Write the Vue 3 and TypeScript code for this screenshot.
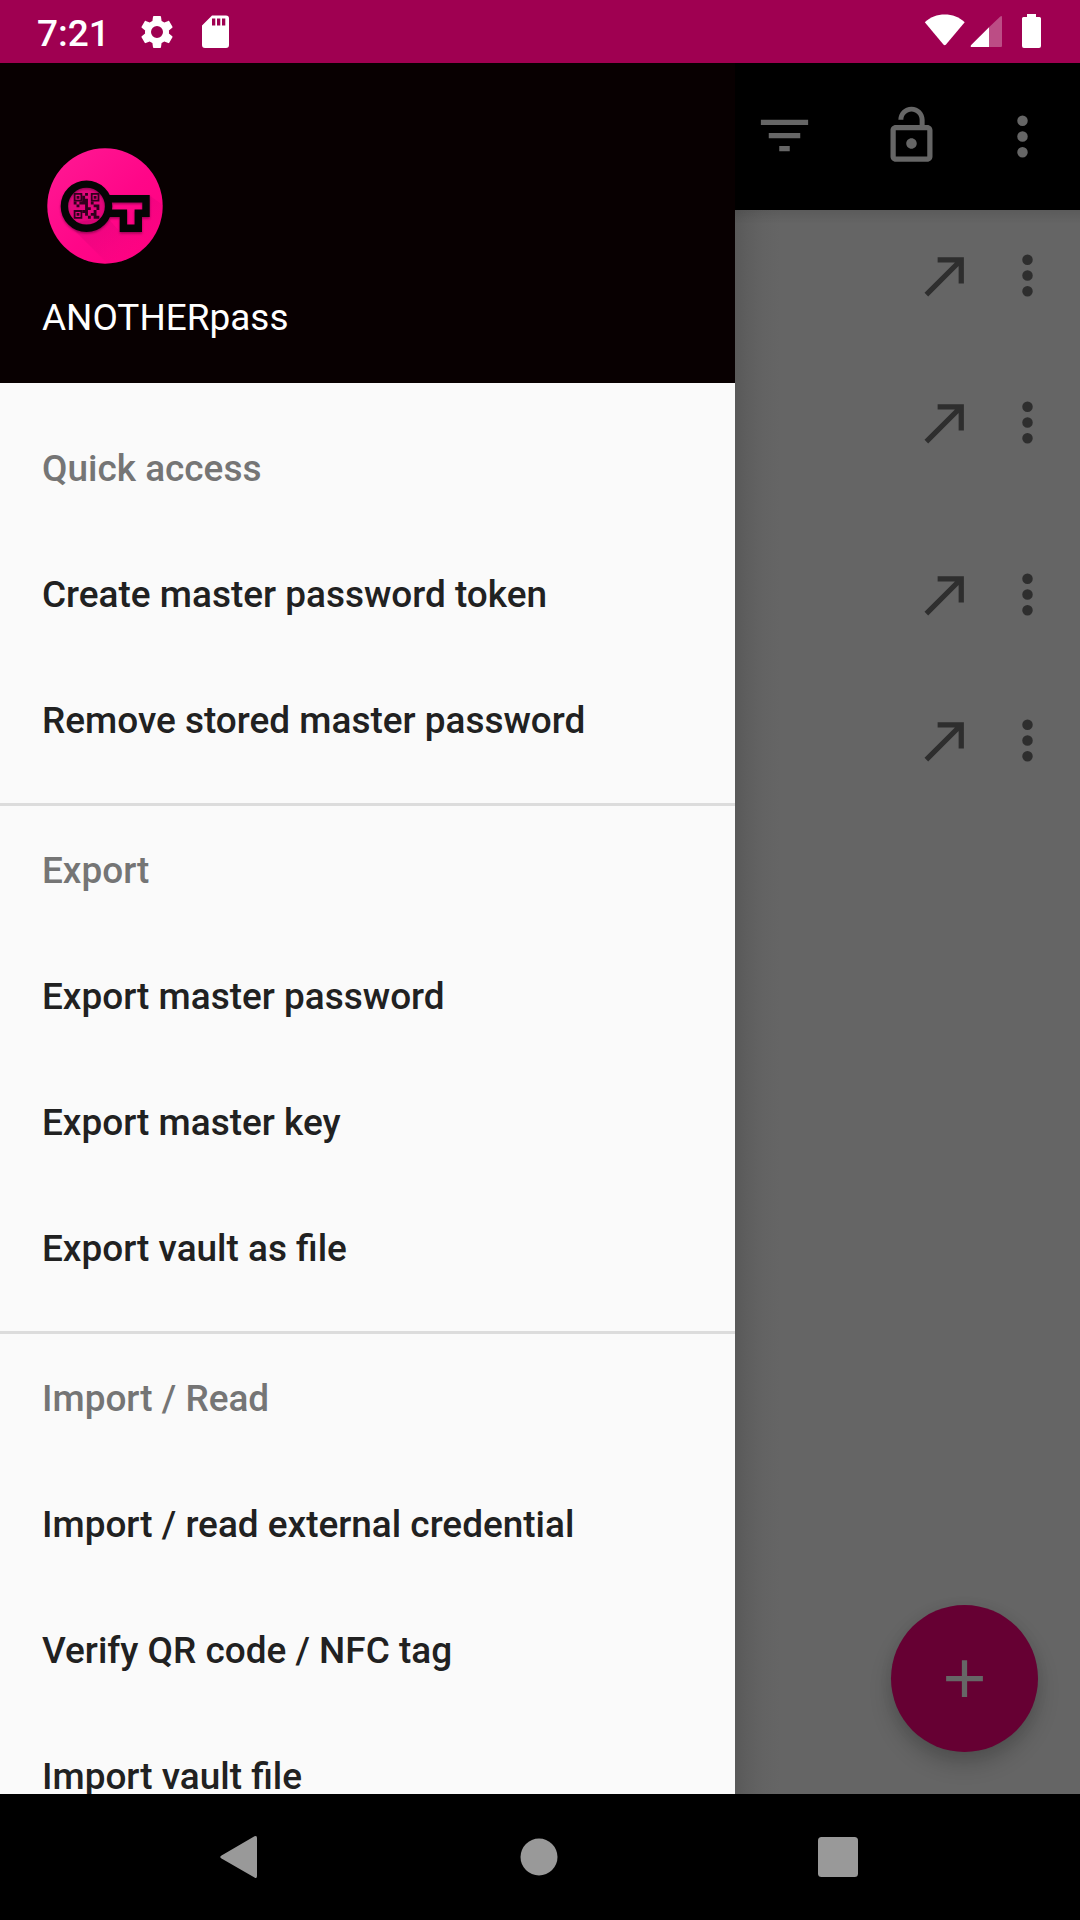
<script setup lang="ts">
interface Section {
  title: string
  items: string[]
}

const sections: Section[] = [
  { title: 'Quick access', items: ['Create master password token', 'Remove stored master password'] },
  { title: 'Export', items: ['Export master password', 'Export master key', 'Export vault as file'] },
  { title: 'Import / Read', items: ['Import / read external credential', 'Verify QR code / NFC tag', 'Import vault file'] },
]

// Heights of the credential rows; the third starts after a wider gap
const credentialRows: number[] = [147, 172, 146, 147]

// Modules of the small code inside the key's bow, without the three finders
const code: string[] = [
  '....#....',
  '...#.....',
  '...##....',
  '#.###.#..',
  '.#..#..##',
  '....##..#',
  '...##..#.',
  '....#.##.',
  '.....#.##',
]
const unit = 2.85
const modulePath: string = code
  .flatMap((line, r) =>
    [...line].map((c, i) => (c === '#' ? `M${31.7 + i * unit} ${50 + r * unit}h${unit}v${unit}h-${unit}z` : '')),
  )
  .join('')
</script>

<template>
  <div class="screen">
    <header class="status">
      <span class="clock">7:21</span>
      <svg class="gear" width="40" height="40" viewBox="0 0 24 24"><path fill="#fff" d="M19.14 12.94c.04-.3.06-.61.06-.94 0-.32-.02-.64-.07-.94l2.03-1.58c.18-.14.23-.41.12-.61l-1.92-3.32c-.12-.22-.37-.29-.59-.22l-2.39.96c-.5-.38-1.03-.7-1.62-.94L14.4 2.810c-.04-.24-.24-.41-.48-.41h-3.84c-.24 0-.43.17-.47.41l-.36 2.54c-.59.24-1.13.57-1.62.94l-2.39-.96c-.22-.08-.47 0-.59.22L2.740 8.870c-.12.21-.08.47.12.61l2.030 1.580c-.05.3-.09.63-.09.94s.02.64.07.94l-2.03 1.58c-.18.14-.23.41-.12.61l1.920 3.320c.12.22.37.29.59.22l2.390-.96c.5.38 1.030.7 1.620.94l.36 2.540c.05.24.24.41.48.41h3.840c.24 0 .44-.17.47-.41l.36-2.540c.59-.24 1.130-.56 1.620-.94l2.390.96c.22.08.47 0 .59-.22l1.920-3.320c.12-.22.07-.47-.12-.61l-2.010-1.580zM12 15.600A3.600 3.600 0 1 1 12 8.400a3.600 3.600 0 0 1 0 7.200z" /></svg>
      <svg class="card" width="27" height="34" viewBox="0 0 27 34"><path fill="#fff" fill-rule="evenodd" d="M10 0.500h14a3 3 0 0 1 3 3V30a3 3 0 0 1-3 3H3a3 3 0 0 1-3-3V10.500zM10 3.500v7h3.300v-7zM15 3.500v7h3.300v-7zM20 3.500v7h3.300v-7z" /></svg>
      <span class="fill" />
      <svg class="signals" width="120" height="36" viewBox="0 0 120 36">
        <path fill="#fff" d="M.8 8.200C11-2.200 30.500-2.200 40.700 8.200L22 30.600q-1.300 1.500-2.600 0z" />
        <path fill="#fff" opacity=".3" d="M78 32V3.200Q78 1 76.300 2.500L65 13.300V33h12q1 0 1-1z" />
        <path fill="#fff" d="M65 13.300V33H48.200q-2.600 0-1-2z" />
        <path fill="#fff" d="M103 0h9v3h3.500q1.500 0 1.500 1.500V32q0 2-2 2H100q-2 0-2-2V4.500Q98 3 99.500 3h3.500z" />
      </svg>
    </header>

    <main class="body">
      <aside class="drawer">
        <div class="head">
          <svg class="logo" width="126" height="126" viewBox="0 0 126 126">
            <defs>
              <linearGradient id="disc" x1="0" y1="0" x2="1" y2="1">
                <stop offset="0" stop-color="#ff1a94" /><stop offset=".55" stop-color="#ff0688" /><stop offset="1" stop-color="#ff0080" />
              </linearGradient>
              <clipPath id="round"><circle cx="63" cy="63" r="57.700" /></clipPath>
              <linearGradient id="cast" x1="0" y1="0" x2="1" y2="1">
                <stop offset=".1" stop-color="#b00068" stop-opacity=".4" /><stop offset=".7" stop-color="#d00070" stop-opacity=".04" />
              </linearGradient>
              <filter id="soft" x="-20%" y="-20%" width="140%" height="150%"><feGaussianBlur stdDeviation="1.300" /></filter>
            </defs>
            <circle cx="63" cy="63" r="57.700" fill="url(#disc)" />
            <g clip-path="url(#round)">
              <path d="M26 81 70 125 126 126V66L107 52v22H100v15H78L65 74z" fill="url(#cast)" />
            </g>
            <circle cx="44.500" cy="63.200" r="20" fill="#a00058" opacity=".3" />
            <g fill="none" stroke-width="7.400">
              <g stroke="#600038" opacity=".6" filter="url(#soft)" transform="translate(0 1.500)">
                <circle cx="44.500" cy="63.200" r="22.100" />
                <path d="M66 55.700h38v14.600h-7.700v15H81.400v-15H66" />
              </g>
              <circle cx="44.500" cy="63.200" r="22.100" stroke="#050505" />
              <path d="M66 55.700h38v14.600h-7.700v15H81.400v-15H66" stroke="#050505" />
            </g>
            <path stroke="#30001d" stroke-width="1.800" fill="none" d="M32.600 50.900h6.800v6.800h-6.800zM49.700 50.900h6.800v6.800h-6.800zM32.600 68h6.800v6.800h-6.800z" />
            <path fill="#30001d" d="M34.600 52.900h2.800v2.800h-2.800zM51.700 52.900h2.800v2.800h-2.800zM34.600 70h2.800v2.800h-2.800z" />
            <path fill="#30001d" :d="modulePath" />
          </svg>
          <h1>ANOTHERpass</h1>
        </div>
        <nav class="menu">
          <section v-for="s in sections" :key="s.title">
            <h2>{{ s.title }}</h2>
            <a v-for="item in s.items" :key="item">{{ item }}</a>
          </section>
        </nav>
      </aside>

      <div class="content">
        <div class="toolbar">
          <svg class="filter" width="63" height="63" viewBox="0 0 24 24"><path fill="#666" d="M10 18h4v-2h-4v2zM3 6v2h18V6H3zm3 7h12v-2H6v2z" /></svg>
          <svg class="lock" width="63" height="63" viewBox="0 0 24 24"><path fill="#666" d="M18 8h-1V6c0-2.760-2.240-5-5-5S7 3.240 7 6h1.900c0-1.710 1.390-3.100 3.100-3.100 1.710 0 3.100 1.390 3.100 3.100v2H6c-1.100 0-2 .9-2 2v10c0 1.100.9 2 2 2h12c1.100 0 2-.9 2-2V10c0-1.100-.9-2-2-2zm0 12H6V10h12v10zm-6-3c1.100 0 2-.9 2-2s-.9-2-2-2-2 .9-2 2 .9 2 2 2z" /></svg>
          <svg class="more" width="63" height="63" viewBox="0 0 24 24"><path fill="#666" d="M12 8a2 2 0 1 0 0-4 2 2 0 0 0 0 4zm0 2a2 2 0 1 0 0 4 2 2 0 0 0 0-4zm0 6a2 2 0 1 0 0 4 2 2 0 0 0 0-4z" /></svg>
        </div>
        <div class="list">
          <div v-for="(h, i) in credentialRows" :key="i" class="row" :style="{ height: h + 'px' }">
            <svg width="63" height="63" viewBox="0 0 24 24"><path fill="#2e2e2e" d="M9 5v2h6.590L4 18.590 5.410 20 17 8.410V15h2V5z" /></svg>
            <svg class="rowmore" width="63" height="63" viewBox="0 0 24 24"><path fill="#2e2e2e" d="M12 8a2 2 0 1 0 0-4 2 2 0 0 0 0 4zm0 2a2 2 0 1 0 0 4 2 2 0 0 0 0-4zm0 6a2 2 0 1 0 0 4 2 2 0 0 0 0-4z" /></svg>
          </div>
        </div>
        <button class="fab" aria-label="Add">
          <svg width="63" height="63" viewBox="0 0 24 24"><path fill="#666" d="M19 13h-6v6h-2v-6H5v-2h6V5h2v6h6v2z" /></svg>
        </button>
      </div>
    </main>

    <footer class="navbar">
      <svg width="38" height="44" viewBox="0 0 38 44"><path fill="#999" d="M34.500 1.300Q37 0 37 3v38q0 3-2.500 1.500L1.500 23.600q-2.500-1.600 0-3.200z" /></svg>
      <svg class="home" width="38" height="38" viewBox="0 0 38 38"><circle cx="19" cy="19" r="18.500" fill="#999" /></svg>
      <svg class="recent" width="40" height="40" viewBox="0 0 40 40"><rect width="40" height="40" rx="3.500" fill="#999" /></svg>
    </footer>
  </div>
</template>

<style>
body { margin: 0; background: #000; }
</style>

<style scoped>
.screen { width: 1080px; height: 1920px; display: flex; flex-direction: column; overflow: hidden; font-family: Roboto, "Liberation Sans", sans-serif; }
.screen svg { display: block; flex: none; }
.status { height: 63px; flex: none; background: #9f0051; display: flex; align-items: flex-start; }
.clock { width: 100px; margin-left: 37px; color: #fff; font-size: 37px; font-weight: 500; line-height: 43px; padding-top: 12px; }
.gear { margin: 12px 0 0; }
.card { margin: 15px 0 0 25px; }
.fill { flex: 1; }
.signals { margin: 14px 36px 0 0; }
.body { height: 1731px; flex: none; display: flex; }
.drawer { width: 735px; flex: none; background: #fafafa; display: flex; flex-direction: column; overflow: hidden; }
.head { height: 320px; flex: none; background: #080001; box-sizing: border-box; padding: 80px 42px 0; }
h1 { margin: 25px 0 0; font-size: 36.95px; line-height: 48px; font-weight: 400; color: #fff; }
.menu { padding-top: 21px; flex: none; }
section + section { border-top: 3px solid #dcdcdc; margin-top: 21px; }
h2, a { display: block; margin: 0; padding-left: 42px; height: 126px; line-height: 129px; font-size: 36.95px; font-weight: 500; color: #212121; white-space: nowrap; }
h2 { color: #757575; }
.content { flex: 1; display: flex; flex-direction: column; background: linear-gradient(90deg, #595959 0, #5e5e5e 12px, #636363 28px, #656565 46px); }
.toolbar { height: 147px; flex: none; background: #000; display: flex; align-items: center; }
.filter { margin: 0 0 2px 18px; }
.lock { margin: 0 0 2px 64px; }
.more { margin-left: 48px; }
.list { flex: 1; padding-top: 34px; background: linear-gradient(rgba(0, 0, 0, .1), rgba(0, 0, 0, 0) 14px); }
.row { display: flex; align-items: flex-start; padding-left: 179px; box-sizing: border-box; }
.rowmore { margin-left: 19px; }
.fab { align-self: flex-end; flex: none; width: 147px; height: 147px; margin: 0 42px 42px 0; padding: 0; border: 0; border-radius: 50%; background: #660033; display: flex; align-items: center; justify-content: center; box-shadow: 0 12px 22px rgba(0, 0, 0, .2), 0 2px 14px rgba(0, 0, 0, .06); }
.navbar { height: 126px; flex: none; background: #000; display: flex; align-items: center; padding-left: 220px; box-sizing: border-box; }
.home { margin-left: 262px; }
.recent { margin-left: 260px; }
</style>
